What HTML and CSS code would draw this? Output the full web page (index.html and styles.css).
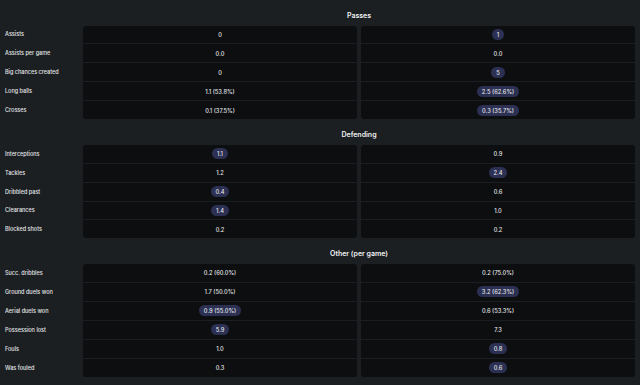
FILE: index.html
```html
<!DOCTYPE html>
<html>
<head>
<meta charset="utf-8">
<link rel="stylesheet" href="styles.css">
</head>
<body>
<div class="page">
  <section class="section">
    <div class="title">Passes</div>
    <div class="labels">
      <div class="row">Assists</div>
      <div class="row">Assists per game</div>
      <div class="row">Big chances created</div>
      <div class="row">Long balls</div>
      <div class="row">Crosses</div>
    </div>
    <div class="card">
      <div class="row"><span class="val">0</span></div>
      <div class="row"><span class="val">0.0</span></div>
      <div class="row"><span class="val">0</span></div>
      <div class="row"><span class="val">1.1 (53.8%)</span></div>
      <div class="row"><span class="val">0.1 (37.5%)</span></div>
    </div>
    <div class="card">
      <div class="row"><span class="val hi">1</span></div>
      <div class="row"><span class="val">0.0</span></div>
      <div class="row"><span class="val hi">5</span></div>
      <div class="row"><span class="val hi">2.5 (62.6%)</span></div>
      <div class="row"><span class="val hi">0.3 (35.7%)</span></div>
    </div>
  </section>
  <section class="section">
    <div class="title">Defending</div>
    <div class="labels">
      <div class="row">Interceptions</div>
      <div class="row">Tackles</div>
      <div class="row">Dribbled past</div>
      <div class="row">Clearances</div>
      <div class="row">Blocked shots</div>
    </div>
    <div class="card">
      <div class="row"><span class="val hi">1.1</span></div>
      <div class="row"><span class="val">1.2</span></div>
      <div class="row"><span class="val hi">0.4</span></div>
      <div class="row"><span class="val hi">1.4</span></div>
      <div class="row"><span class="val">0.2</span></div>
    </div>
    <div class="card">
      <div class="row"><span class="val">0.9</span></div>
      <div class="row"><span class="val hi">2.4</span></div>
      <div class="row"><span class="val">0.6</span></div>
      <div class="row"><span class="val">1.0</span></div>
      <div class="row"><span class="val">0.2</span></div>
    </div>
  </section>
  <section class="section">
    <div class="title">Other (per game)</div>
    <div class="labels">
      <div class="row">Succ. dribbles</div>
      <div class="row">Ground duels won</div>
      <div class="row">Aerial duels won</div>
      <div class="row">Possession lost</div>
      <div class="row">Fouls</div>
      <div class="row">Was fouled</div>
    </div>
    <div class="card">
      <div class="row"><span class="val">0.2 (60.0%)</span></div>
      <div class="row"><span class="val">1.7 (50.0%)</span></div>
      <div class="row"><span class="val hi">0.9 (55.0%)</span></div>
      <div class="row"><span class="val hi">5.9</span></div>
      <div class="row"><span class="val">1.0</span></div>
      <div class="row"><span class="val">0.3</span></div>
    </div>
    <div class="card">
      <div class="row"><span class="val">0.2 (75.0%)</span></div>
      <div class="row"><span class="val hi">3.2 (62.3%)</span></div>
      <div class="row"><span class="val">0.6 (53.3%)</span></div>
      <div class="row"><span class="val">7.3</span></div>
      <div class="row"><span class="val hi">0.8</span></div>
      <div class="row"><span class="val hi">0.6</span></div>
    </div>
  </section>
</div>
</body>
</html>
```
FILE: styles.css
```css
html, body {
  margin: 0;
  padding: 0;
  background: #1c1f22;
}
body {
  width: 640px;
  height: 385px;
  overflow: hidden;
  font-family: Inter, "Noto Sans", sans-serif;
  color: #e4e6e8;
}
.page {
  display: flex;
  flex-direction: column;
}
.section {
  display: grid;
  grid-template-columns: 79px 274px 274px;
  column-gap: 4px;
  padding-right: 5px;
}
.title {
  grid-column: 2 / 4;
  text-align: center;
  font-size: 7px;
  font-weight: 600;
  line-height: 9px;
  padding-top: 10.5px;
  padding-bottom: 6px;
  color: #f0f1f2;
}
.labels {
  grid-column: 1;
  display: flex;
  flex-direction: column;
}
.labels .row {
  justify-content: flex-start;
  padding-left: 5px;
  font-size: 5.5px;
  font-weight: 500;
}
.card {
  display: flex;
  flex-direction: column;
  background: #0c0e10;
  border-radius: 3px;
}
.row {
  height: 17.95px;
  display: flex;
  align-items: center;
  justify-content: center;
  font-size: 5.7px;
  font-weight: 500;
  white-space: nowrap;
}
.row + .row {
  border-top: 1px solid #1a1d21;
}
.labels .row + .row {
  border-top-color: transparent;
}
.val {
  line-height: 11px;
  height: 11px;
  padding: 0 5px;
  border-radius: 6px;
}
.val.hi {
  background: #2c3052;
}
```
